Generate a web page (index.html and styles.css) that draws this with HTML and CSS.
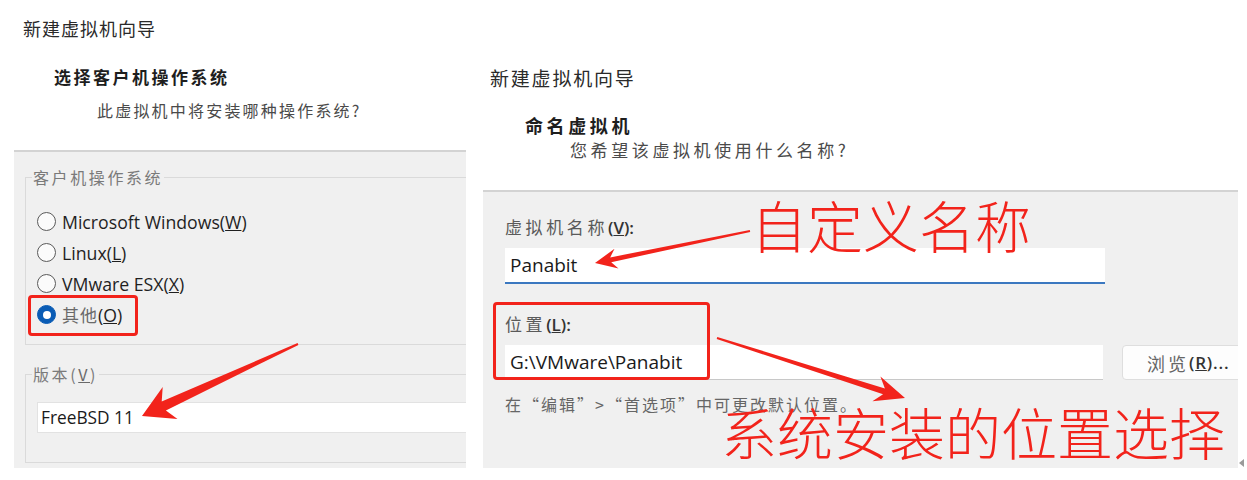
FILE: index.html
```html
<!DOCTYPE html>
<html lang="zh-CN">
<head>
<meta charset="utf-8">
<title>新建虚拟机向导</title>
<link rel="stylesheet" href="styles.css">
</head>
<body>
<div class="stage">
  <section class="shot shot-a">
    <header class="hdr hdr-a">
      <div class="wiz-title">新建虚拟机向导</div>
      <div class="step-title">选择客户机操作系统</div>
      <div class="step-sub">此虚拟机中将安装哪种操作系统?</div>
    </header>
    <div class="panel panel-a">
      <fieldset class="grp grp-os">
        <legend>客户机操作系统</legend>
        <div class="radio"><span class="dot"></span><span class="opt">Microsoft Windows(<u>W</u>)</span></div>
        <div class="radio"><span class="dot"></span><span class="opt">Linux(<u>L</u>)</span></div>
        <div class="radio"><span class="dot"></span><span class="opt">VMware ESX(<u>X</u>)</span></div>
        <div class="radio on"><span class="dot"></span><span class="opt"><span class="cjk-soft">其他</span>(<u>O</u>)</span></div>
      </fieldset>
      <fieldset class="grp grp-ver">
        <legend>版本(<u>V</u>)</legend>
        <div class="field field-ver">FreeBSD 11</div>
      </fieldset>
    </div>
  </section>

  <section class="shot shot-b">
    <header class="hdr hdr-b">
      <div class="wiz-title wiz-title-b">新建虚拟机向导</div>
      <div class="step-title step-title-b">命名虚拟机</div>
      <div class="step-sub step-sub-b">您希望该虚拟机使用什么名称?</div>
    </header>
    <div class="panel panel-b">
      <div class="lbl">虚拟机名称<span class="mn">(<u>V</u>):</span></div>
      <div class="field field-name">Panabit</div>
      <div class="lbl lbl-loc">位置<span class="mn">(<u>L</u>):</span></div>
      <div class="loc-row">
        <div class="field field-loc">G:\VMware\Panabit</div>
        <div class="btn">浏览<span class="mn">(<u>R</u>)...</span></div>
      </div>
      <div class="hint">在“编辑”&gt;“首选项”中可更改默认位置。</div>
    </div>
  </section>
</div>

<svg class="marks" width="1247" height="480" viewBox="0 0 1247 480" aria-hidden="true">
  <polygon points="142,416 162.7,386.9 161.7,401.4 297.6,343.1 298.4,344.9 165.9,410.4 177.5,419.1"/>
  <polygon points="595,263 614.5,248.8 610.2,257.4 749.8,230 750.2,232 611.2,262.2 618.5,268.4"/>
  <polygon points="905,398 880.4,376.5 884.9,388.4 717.3,337 716.7,339 883.1,394.2 872.4,401.3"/>
</svg>
<div class="hl hl-a"></div>
<div class="hl hl-b"></div>
<div class="note note-a">自定义名称</div>
<div class="note note-b">系统安装的位置选择</div>
<span class="edge-tri"></span>
</body>
</html>
```

FILE: styles.css
```css
* { box-sizing: border-box; }

html, body {
  margin: 0;
  padding: 0;
}

body {
  width: 1247px;
  height: 480px;
  position: relative;
  overflow: hidden;
  background: #ffffff;
  font-family: "Noto Sans CJK SC", sans-serif;
  color: #222;
}

.stage {
  display: flex;
  align-items: flex-start;
}

.shot-a { width: 470px; }
.shot-b { width: 755px; margin-left: 13px; }

/* ---------- headers ---------- */
.hdr-a { height: 150px; padding: 16px 0 0 23px; }
.hdr-b { height: 190px; padding: 66px 0 0 7px; }

.wiz-title {
  font-size: 18px;
  line-height: 24px;
  letter-spacing: 1px;
  color: #2a2a2a;
}
.wiz-title-b { font-size: 19px; letter-spacing: 1.8px; }

.step-title {
  margin: 25px 0 0 31px;
  font-size: 17px;
  line-height: 24px;
  letter-spacing: 2.5px;
  font-weight: 700;
  color: #1e1e1e;
}
.step-title-b {
  margin: 23px 0 0 35px;
  font-size: 18px;
  letter-spacing: 3.6px;
}

.step-sub {
  margin: 10px 0 0 74px;
  font-size: 16px;
  line-height: 22px;
  letter-spacing: 2.2px;
  color: #4a4a4a;
}
.step-sub-b {
  margin: 1px 0 0 80px;
  font-size: 17px;
  line-height: 24px;
  letter-spacing: 3.6px;
}

/* ---------- panels ---------- */
.panel {
  background: #f0f0f0;
  border-top: 2px solid #d3d3d3;
  overflow: hidden;
}
.panel-a {
  margin-left: 14px;
  width: 452px;
  height: 318px;
  padding-left: 11px;
  padding-top: 14px;
}
.panel-b {
  width: 755px;
  height: 278px;
  padding: 23px 0 0 22px;
}

/* ---------- group boxes ---------- */
.grp {
  margin: 0;
  width: 470px;
  border: 1px solid #dadada;
  padding: 0 0 0 6px;
  min-width: 0;
}
.grp legend {
  padding: 0 1px;
  font-size: 16px;
  line-height: 22px;
  letter-spacing: 2.6px;
  color: #7a7a7a;
}
.grp-os { padding-top: 18px; padding-bottom: 14px; }
.grp-ver { margin-top: 18px; padding-top: 17px; padding-bottom: 29px; }
.grp-ver legend u { color: #6a6a6a; }

.radio {
  height: 31px;
  display: flex;
  align-items: center;
  padding-left: 5px;
}
.dot {
  width: 19px;
  height: 19px;
  border-radius: 50%;
  border: 1px solid #5a5a5a;
  background: #fbfbfb;
  flex: none;
  display: flex;
  align-items: center;
  justify-content: center;
}
.radio.on .dot {
  background: #0a5cb5;
  border-color: #0a5cb5;
}
.radio.on .dot::after {
  content: "";
  width: 8px;
  height: 8px;
  border-radius: 50%;
  background: #ffffff;
}
.opt {
  margin-left: 6px;
  font-family: "Open Sans", "Noto Sans CJK SC", sans-serif;
  font-size: 17.7px;
  line-height: 24px;
  color: #1f1f1f;
}
.cjk-soft {
  font-family: "Noto Sans CJK SC", sans-serif;
  font-size: 17px;
  color: #6a6a6a;
  letter-spacing: 1px;
}

/* ---------- fields ---------- */
.field {
  background: #ffffff;
  font-family: "Open Sans", "Noto Sans CJK SC", sans-serif;
  font-size: 17.3px;
  color: #1a1a1a;
  display: flex;
  align-items: center;
  flex: none;
}
.field-ver {
  margin-left: 5px;
  height: 31px;
  border: 1px solid #e2e2e2;
  padding-left: 3px;
}
.field-name {
  margin-top: 8px;
  width: 600px;
  height: 36px;
  padding-left: 5px;
  font-size: 19px;
  border-bottom: 2px solid #3b78c0;
}
.field-loc {
  width: 598px;
  height: 35px;
  padding-left: 5px;
  font-size: 19px;
  border-bottom: 1px solid #c8c8c8;
}

.lbl {
  font-size: 17px;
  line-height: 24px;
  letter-spacing: 3.6px;
  color: #5a5a5a;
}
.lbl-loc { margin-top: 28px; }
.mn {
  font-family: "Open Sans", sans-serif;
  font-weight: 600;
  letter-spacing: 0;
  color: #333;
  font-size: 17px;
}

.loc-row {
  margin-top: 8px;
  display: flex;
  align-items: flex-start;
}
.btn {
  margin-left: 19px;
  width: 140px;
  height: 35px;
  flex: none;
  background: #fdfdfd;
  border: 1px solid #dedede;
  border-radius: 4px;
  padding-left: 24px;
  display: flex;
  align-items: center;
  font-size: 18px;
  letter-spacing: 3px;
  color: #666;
  white-space: nowrap;
}
.btn .mn { font-size: 17px; letter-spacing: 0.8px; }

.hint {
  margin-top: 16px;
  font-size: 16px;
  line-height: 16px;
  letter-spacing: 2px;
  color: #666;
}

/* ---------- annotations (overlays) ---------- */
.marks {
  position: absolute;
  left: 0;
  top: 0;
  pointer-events: none;
}
.marks polygon { fill: #f2231b; }

.hl {
  position: absolute;
  border: 3px solid #f2231b;
  border-radius: 4px;
}
.hl-a { left: 28px; top: 295px; width: 110px; height: 41px; }
.hl-b { left: 493px; top: 302px; width: 217px; height: 78px; }

.note {
  position: absolute;
  font-size: 56px;
  line-height: 40px;
  font-weight: 300;
  color: #f2231b;
  white-space: nowrap;
}
.note-a { left: 751px; top: 204px; }
.note-b { left: 721px; top: 411px; }

.edge-tri {
  position: absolute;
  left: 1239px;
  top: 459px;
  width: 0;
  height: 0;
  border-top: 4px solid transparent;
  border-bottom: 4px solid transparent;
  border-right: 5px solid #9a9a9a;
}
```
